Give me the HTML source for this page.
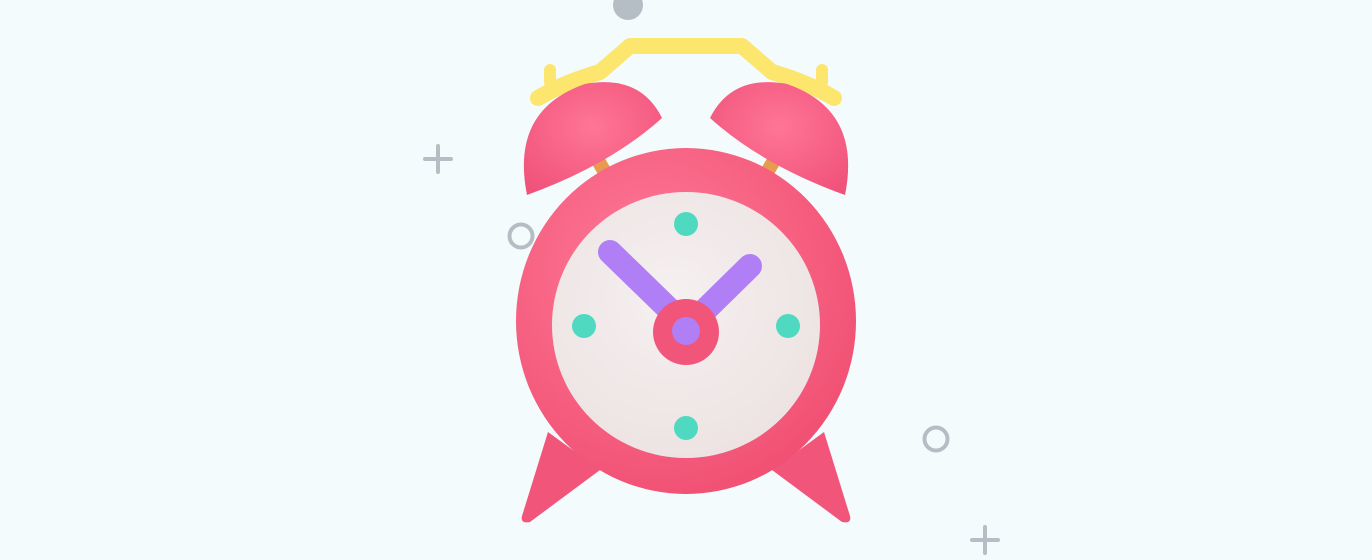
<!DOCTYPE html><html><head><style>html,body{margin:0;padding:0;background:#f3fbfc;}svg{display:block}</style></head><body>
<svg width="1372" height="560" viewBox="0 0 1372 560" xmlns="http://www.w3.org/2000/svg">
<defs>
<radialGradient id="body" cx="0.4" cy="0.35" r="0.7"><stop offset="0" stop-color="#ff7a98"/><stop offset="1" stop-color="#f04f72"/></radialGradient>
<radialGradient id="face" cx="0.45" cy="0.4" r="0.6"><stop offset="0" stop-color="#f6f0f0"/><stop offset="1" stop-color="#ede3e3"/></radialGradient>
<radialGradient id="bell" cx="0.5" cy="0.4" r="0.7"><stop offset="0" stop-color="#ff7596"/><stop offset="1" stop-color="#f0527a"/></radialGradient>
</defs>
<rect width="1372" height="560" fill="#f3fbfc"/>
<circle cx="628" cy="5" r="15" fill="#b4bec4"/>
<g stroke="#b4bec4" stroke-width="4" fill="none" stroke-linecap="round">
<path d="M438,146V172M425,159H451"/>
<path d="M985,527V553M972,540H998"/>
<circle cx="521" cy="236" r="11.5"/>
<circle cx="936" cy="439" r="11.5"/>
</g>
<path d="M548,432 L522,516 Q520,524 530,522 L600,470 Z" fill="#f2557a"/>
<path d="M824,432 L850,516 Q852,524 842,522 L772,470 Z" fill="#f2557a"/>
<path d="M538,98 Q565,82 600,72 L630,46 L742,46 L772,72 Q807,82 834,98" fill="none" stroke="#fde66e" stroke-width="16" stroke-linejoin="round" stroke-linecap="round"/>
<path d="M550,82V70M822,82V70" stroke="#fde66e" stroke-width="12" stroke-linecap="round"/>
<rect x="596" y="160" width="14" height="18" fill="#e89a4e" transform="rotate(-30 603 169)"/>
<rect x="762" y="160" width="14" height="18" fill="#e89a4e" transform="rotate(30 769 169)"/>
<path d="M527,195 Q510,110 585,84 Q640,74 662,118 Q610,165 527,195 Z" fill="url(#bell)"/>
<path d="M845,195 Q862,110 787,84 Q732,74 710,118 Q762,165 845,195 Z" fill="url(#bell)"/>
<ellipse cx="686" cy="321" rx="170" ry="173" fill="url(#body)"/>
<ellipse cx="686" cy="325" rx="134" ry="133" fill="url(#face)"/>
<g fill="#4fd9c0"><circle cx="686" cy="224" r="12"/><circle cx="584" cy="326" r="12"/><circle cx="788" cy="326" r="12"/><circle cx="686" cy="428" r="12"/></g>
<g stroke="#b07ef5" stroke-width="24" stroke-linecap="round"><path d="M610,252L680,320"/><path d="M750,266L695,320"/></g>
<circle cx="686" cy="332" r="33" fill="#f2557a"/>
<circle cx="686" cy="331" r="14" fill="#b07ef5"/>
</svg>
</body></html>
